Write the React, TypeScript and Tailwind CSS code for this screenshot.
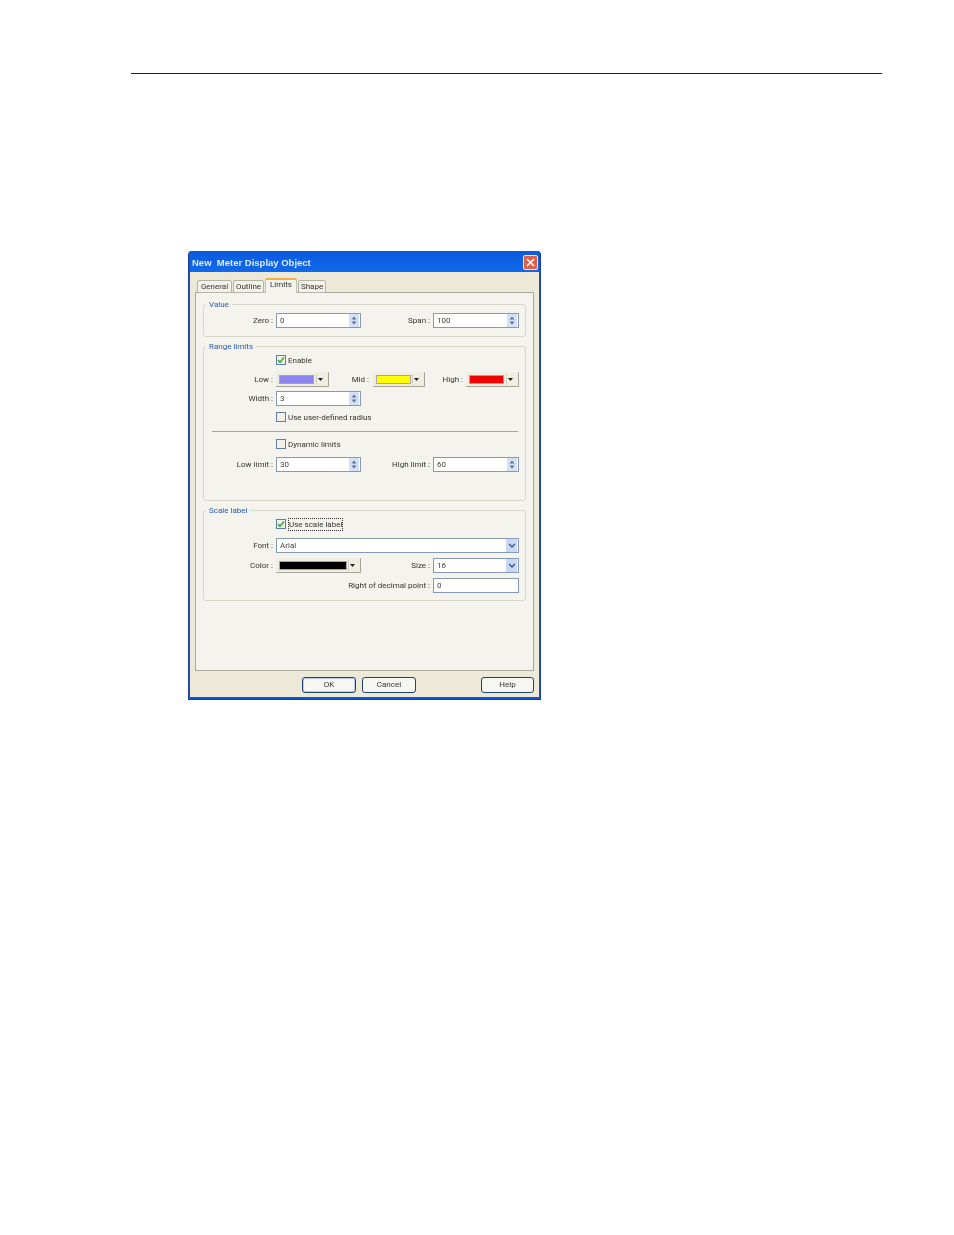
import type { ReactNode } from "react";

function Label({ width, children, gap = "mr-[3px]" }: { width: string; children: ReactNode; gap?: string }) {
  return <div className={`${width} ${gap} shrink-0 text-right leading-[15px]`}>{children}</div>;
}

function Spin({ value, width = "w-[85px]" }: { value: string; width?: string }) {
  return (
    <div className={`${width} h-[15px] shrink-0 flex items-center border border-[#8499b5] bg-white pl-[3px] pr-px`}>
      <span className="flex-1 leading-[13px] text-[#444]">{value}</span>
      <div className="w-[10px] h-[13px] flex flex-col items-center justify-center gap-px bg-[#d5e0f6]">
        <svg width="6" height="4" viewBox="0 0 6 4"><path d="M0.5 3.5 L3 0.5 L5.5 3.5 Z" fill="#5f7398" /></svg>
        <svg width="6" height="4" viewBox="0 0 6 4"><path d="M0.5 0.5 L3 3.5 L5.5 0.5 Z" fill="#5f7398" /></svg>
      </div>
    </div>
  );
}

function Select({ value, width }: { value: string; width: string }) {
  return (
    <div className={`${width} h-[15px] shrink-0 flex items-center border border-[#8499b5] bg-white pl-[3px] pr-px`}>
      <span className="flex-1 leading-[13px] text-[#444]">{value}</span>
      <div className="w-[11px] h-[13px] flex items-center justify-center bg-[#c9d7f3]">
        <svg width="8" height="6" viewBox="0 0 8 6"><path d="M1.2 1 L4 4 L6.8 1" fill="none" stroke="#3d5994" strokeWidth="1.5" /></svg>
      </div>
    </div>
  );
}

function ColorButton({ color, width, swatch }: { color: string; width: string; swatch: string }) {
  return (
    <div className={`${width} h-[15px] shrink-0 flex items-center justify-between rounded-[1px] border-b border-r border-b-[#a9a595] border-r-[#a9a595] bg-[#f0eee3] pl-[3px] pr-[4px]`}>
      <div className={`${swatch} h-[9px] border border-[#a5a5a5]`} style={{ backgroundColor: color }} />
      <div className="h-[11px] w-px bg-[#d2cfc2]" />
      <svg width="5" height="3" viewBox="0 0 5 3" className="mr-px"><path d="M0 0 H5 L2.5 3 Z" fill="#222" /></svg>
    </div>
  );
}

function Check({ checked, text, focused }: { checked?: boolean; text: string; focused?: boolean }) {
  return (
    <div className="flex items-center h-[10px] ml-[72px]">
      <div className="w-[10px] h-[10px] flex items-center justify-center border border-[#5f7f9f] bg-[#f1f1ea]">
        {checked && (
          <svg width="8" height="8" viewBox="0 0 8 8"><path d="M1 4 L3 6.2 L7 1.5" fill="none" stroke="#3aa63a" strokeWidth="1.6" /></svg>
        )}
      </div>
      <span className={`ml-[2px] pt-px leading-[10px] ${focused ? "border border-dotted border-[#333]" : ""}`}>{text}</span>
    </div>
  );
}

function Group({ title, height, children }: { title: string; height: string; children: ReactNode }) {
  return (
    <div className={`relative ${height} rounded-[3px] border border-[#d8d6c8] pt-[8px]`}>
      <span className="absolute left-[2px] top-[-5px] bg-[#f4f3ee] px-[3px] leading-[10px] text-[#2b5ca6]">{title}</span>
      {children}
    </div>
  );
}

function Tab({ text, active, width }: { text: string; active?: boolean; width: string }) {
  if (active) {
    return (
      <div className={`${width} relative z-10 h-[15px] rounded-t-[2px] border-x border-[#c4c2b4] border-t-2 border-t-[#f2b04a] bg-[#f4f3ee] text-center leading-[10px]`}>
        {text}
      </div>
    );
  }
  return (
    <div className={`${width} h-[13px] rounded-t-[2px] border border-[#b5b3a4] bg-[#f3f2ea] text-center leading-[12px]`}>
      {text}
    </div>
  );
}

function DlgButton({ text, width, strong }: { text: string; width: string; strong?: boolean }) {
  return (
    <div className={`${width} h-[16px] rounded-[3px] border border-[#24406f] bg-[#f7f7f2] text-center leading-[14px] ${strong ? "shadow-[inset_0_0_0_1px_#b8cbea]" : ""}`}>
      {text}
    </div>
  );
}

export default function App() {
  return (
    <div className="h-[1235px] w-[954px] overflow-hidden bg-white pt-[73px] font-['Roboto',sans-serif] text-[8px] text-[#333]">
      <div className="ml-[131px] h-px w-[751px] bg-[#222]" />

      <div className="ml-[188px] mt-[177px] h-[449px] w-[353px] rounded-t-[4px] border-x border-b border-[#1a4296] bg-[#0a55d8] px-px pb-[2px] blur-[0.4px]">
        {/* title bar */}
        <div className="flex h-[21px] items-start justify-between bg-gradient-to-b from-[#0b5ae0] to-[#1269ea] pl-[2px] pr-px pt-[4px]">
          <span className="pt-[2px] font-['Liberation_Sans',sans-serif] text-[9.5px] font-bold leading-[12px] whitespace-pre text-[#dfe9ff]">New  Meter Display Object</span>
          <div className="flex h-[15px] w-[15px] items-center justify-center rounded-[2px] border border-[#e8e8e8] bg-[#d8624a]">
            <svg width="9" height="9" viewBox="0 0 9 9"><path d="M1 1 L8 8 M8 1 L1 8" stroke="#fff" strokeWidth="1.7" /></svg>
          </div>
        </div>

        <div className="h-[425px] bg-[#ece9d8] px-[5px] pt-[6px]">
          {/* tabs */}
          <div className="flex items-end ml-[2px] h-[15px] -mb-px gap-[1px]">
            <Tab text="General" width="w-[35px]" />
            <Tab text="Outline" width="w-[31px]" />
            <Tab text="Limits" active width="w-[32px]" />
            <Tab text="Shape" width="w-[28px]" />
          </div>

          {/* panel */}
          <div className="h-[379px] border border-[#aca899] bg-[#f4f3ee] px-[7px] pt-[11px]">
            <Group title="Value" height="h-[33px]">
              <div className="flex">
                <Label width="w-[69px]">Zero :</Label>
                <Spin value="0" />
                <Label width="w-[69px]">Span :</Label>
                <Spin value="100" width="w-[86px]" />
              </div>
            </Group>

            <div className="mt-[9px]">
              <Group title="Range limits" height="h-[155px]">
                <Check checked text="Enable" />
                <div className="mt-[7px] flex">
                  <Label width="w-[69px]">Low :</Label>
                  <ColorButton color="#8d84ee" width="w-[53px]" swatch="w-[35px]" />
                  <Label width="w-[40px]" gap="mr-[4px]">Mid :</Label>
                  <ColorButton color="#ffff00" width="w-[52px]" swatch="w-[35px]" />
                  <Label width="w-[38px]">High :</Label>
                  <ColorButton color="#f00000" width="w-[53px]" swatch="w-[35px]" />
                </div>
                <div className="mt-[4px] flex">
                  <Label width="w-[69px]">Width :</Label>
                  <Spin value="3" />
                </div>
                <div className="mt-[6px]">
                  <Check text="Use user-defined radius" />
                </div>
                <div className="ml-[8px] mt-[9px] h-px w-[306px] bg-[#a8a698]" />
                <div className="mt-[7px]">
                  <Check text="Dynamic limits" />
                </div>
                <div className="mt-[8px] flex">
                  <Label width="w-[69px]">Low limit :</Label>
                  <Spin value="30" />
                  <Label width="w-[69px]">High limit :</Label>
                  <Spin value="60" width="w-[86px]" />
                </div>
              </Group>
            </div>

            <div className="mt-[9px]">
              <Group title="Scale label" height="h-[91px]">
                <Check checked focused text="Use scale label" />
                <div className="mt-[9px] flex">
                  <Label width="w-[69px]">Font :</Label>
                  <Select value="Arial" width="w-[243px]" />
                </div>
                <div className="mt-[5px] flex">
                  <Label width="w-[69px]">Color :</Label>
                  <ColorButton color="#000000" width="w-[85px]" swatch="w-[68px]" />
                  <Label width="w-[69px]">Size :</Label>
                  <Select value="16" width="w-[86px]" />
                </div>
                <div className="mt-[5px] flex">
                  <Label width="w-[226px]">Right of decimal point :</Label>
                  <div className="h-[15px] w-[86px] border border-[#8499b5] bg-white pl-[3px] leading-[13px] text-[#444]">0</div>
                </div>
              </Group>
            </div>
          </div>

          {/* footer buttons */}
          <div className="mt-[6px] flex">
            <div className="ml-[107px]"><DlgButton text="OK" strong width="w-[54px]" /></div>
            <div className="ml-[6px]"><DlgButton text="Cancel" width="w-[54px]" /></div>
            <div className="ml-[65px]"><DlgButton text="Help" width="w-[53px]" /></div>
          </div>
        </div>
      </div>
    </div>
  );
}
